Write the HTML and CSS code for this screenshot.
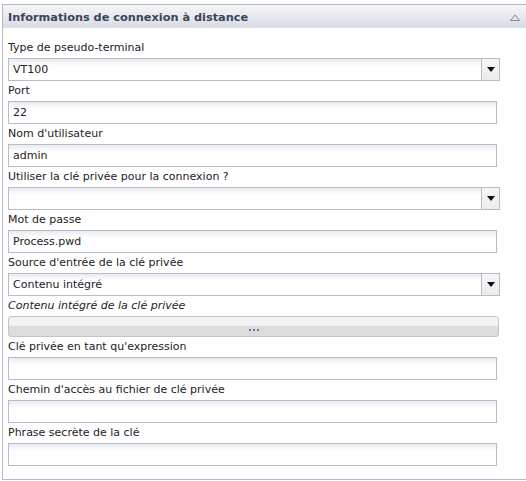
FILE: index.html
```html
<!DOCTYPE html>
<html lang="fr">
<head>
<meta charset="utf-8">
<title>Informations de connexion à distance</title>
<link rel="stylesheet" href="styles.css">
</head>
<body>
<section class="panel">
  <header class="panel-head">
    <h2 class="panel-title">Informations de connexion à distance</h2>
    <svg class="collapse" width="10" height="7" viewBox="0 0 10 7"><path d="M0.5 6.5 L5 1 L9.5 6.5 Z" fill="none" stroke="#8a8a8a" stroke-width="1"/></svg>
  </header>
  <div class="panel-body">
    <div class="label">Type de pseudo-terminal</div>
    <div class="select"><span class="value">VT100</span><span class="drop"><svg width="8" height="5" viewBox="0 0 8 5"><path d="M0 0 H8 L4 5 Z" fill="#111"/></svg></span></div>

    <div class="label">Port</div>
    <div class="input"><span class="value">22</span></div>

    <div class="label">Nom d'utilisateur</div>
    <div class="input"><span class="value">admin</span></div>

    <div class="label">Utiliser la clé privée pour la connexion ?</div>
    <div class="select"><span class="value"></span><span class="drop"><svg width="8" height="5" viewBox="0 0 8 5"><path d="M0 0 H8 L4 5 Z" fill="#111"/></svg></span></div>

    <div class="label">Mot de passe</div>
    <div class="input"><span class="value">Process.pwd</span></div>

    <div class="label">Source d'entrée de la clé privée</div>
    <div class="select"><span class="value">Contenu intégré</span><span class="drop"><svg width="8" height="5" viewBox="0 0 8 5"><path d="M0 0 H8 L4 5 Z" fill="#111"/></svg></span></div>

    <div class="label italic">Contenu intégré de la clé privée</div>
    <div class="button"><span class="dots"><i></i><i></i><i></i></span></div>

    <div class="label">Clé privée en tant qu'expression</div>
    <div class="input"><span class="value"></span></div>

    <div class="label">Chemin d'accès au fichier de clé privée</div>
    <div class="input"><span class="value"></span></div>

    <div class="label">Phrase secrète de la clé</div>
    <div class="input"><span class="value"></span></div>
  </div>
</section>
</body>
</html>
```
FILE: styles.css
```css
html, body {
  margin: 0;
  padding: 0;
  background: #fff;
  overflow: hidden;
}
body {
  font-family: "DejaVu Sans", Verdana, sans-serif;
  font-size: 11px;
  color: #222;
}
.panel {
  margin: 4px 0 0 2px;
  width: 540px;
  height: 476px;
  box-sizing: border-box;
  border: 1px solid #b6b9c6;
}
.panel-head {
  height: 23px;
  box-sizing: border-box;
  display: flex;
  align-items: center;
  justify-content: space-between;
  padding: 1px 6px 0 5px;
  width: 523px;
  background: linear-gradient(#f5f6f9, #d8dbe4);
}
.panel-title {
  margin: 0;
  font-size: 11.3px;
  font-weight: bold;
  color: #3a4556;
}
.panel-body {
  padding: 10px 5px 0 5px;
  width: 492px;
}
.label {
  height: 20px;
  line-height: 19px;
  white-space: nowrap;
}
.italic {
  font-style: italic;
}
.select, .input {
  height: 23px;
  box-sizing: border-box;
  border: 1px solid #b8bbca;
  background: linear-gradient(#e9ebee, #fff 7px);
  display: flex;
  align-items: center;
}
.select { width: 492px; }
.input { width: 489px; }
.value {
  flex: 1;
  padding-left: 4px;
  line-height: 21px;
}
.drop {
  width: 17px;
  height: 21px;
  border-left: 1px solid #b8bbca;
  background: linear-gradient(#f6f6f6, #ececec);
  display: flex;
  align-items: center;
  justify-content: center;
}
.button {
  width: 491px;
  height: 21px;
  box-sizing: border-box;
  border: 1px solid #c4c4c4;
  border-radius: 3px;
  background: linear-gradient(#f3f3f3 0, #f1f1f1 50%, #dcdcdc 50%, #dcdcdc 100%);
  display: flex;
  align-items: flex-end;
  justify-content: center;
  padding-bottom: 5px;
}
.dots {
  display: flex;
  gap: 2px;
}
.dots i {
  display: block;
  width: 2px;
  height: 2px;
  background: #4f7fb4;
}
```
